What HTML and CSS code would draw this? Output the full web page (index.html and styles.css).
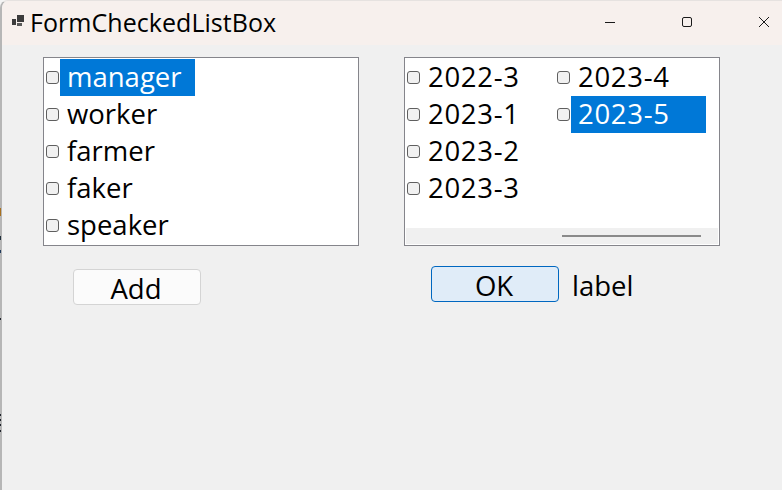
FILE: index.html
```html
<html>

<head>
  <meta charset="UTF-8">
  <title>FormCheckedListBox</title>
  <meta name="viewport" content="width=device-width, initial-scale=1.0">
  <link rel="stylesheet" href="styles.css">
</head>

<body>
  <div class="window">
    <div class="titlebar">
      <svg class="app-icon" width="13" height="13" viewBox="0 0 13 13">
        <rect x="0" y="4" width="4" height="6" fill="#3c3c3c" />
        <rect x="5" y="0" width="7" height="7" fill="#3c3c3c" />
        <rect x="5" y="8" width="5" height="3" fill="#5a5a5a" />
      </svg>
      <span class="title">FormCheckedListBox</span>
      <div class="caption-buttons">
        <svg width="12" height="12" viewBox="0 0 12 12">
          <path d="M1 6.5H11" stroke="#1a1a1a" stroke-width="1" fill="none" />
        </svg>
        <svg width="12" height="12" viewBox="0 0 12 12">
          <rect x="1.5" y="1.5" width="9" height="9" rx="1.5" stroke="#1a1a1a" stroke-width="1" fill="none" />
        </svg>
        <svg width="12" height="12" viewBox="0 0 12 12">
          <path d="M1 1L11 11M11 1L1 11" stroke="#1a1a1a" stroke-width="1" fill="none" />
        </svg>
      </div>
    </div>

    <div class="content">
      <div class="panel">
        <div class="listbox">
          <div class="items">
            <div class="item selected"><span class="check"></span><span class="text">manager</span></div>
            <div class="item"><span class="check"></span><span class="text">worker</span></div>
            <div class="item"><span class="check"></span><span class="text">farmer</span></div>
            <div class="item"><span class="check"></span><span class="text">faker</span></div>
            <div class="item"><span class="check"></span><span class="text">speaker</span></div>
          </div>
        </div>
        <div class="actions actions-left">
          <button class="btn">Add</button>
        </div>
      </div>

      <div class="panel">
        <div class="listbox">
          <div class="items items-columns">
            <div class="item"><span class="check"></span><span class="text">2022-3</span></div>
            <div class="item"><span class="check"></span><span class="text">2023-1</span></div>
            <div class="item"><span class="check"></span><span class="text">2023-2</span></div>
            <div class="item"><span class="check"></span><span class="text">2023-3</span></div>
            <div class="item"><span class="check"></span><span class="text">2023-4</span></div>
            <div class="item selected"><span class="check"></span><span class="text">2023-5</span></div>
          </div>
          <div class="hscroll"><div class="hscroll-thumb"></div></div>
        </div>
        <div class="actions actions-right">
          <button class="btn btn-default">OK</button>
          <span class="label">label</span>
        </div>
      </div>
    </div>
  </div>
  <div class="desktop-edge"></div>
</body>

</html>
```

FILE: styles.css
```css
* {
  font-family: 'Open Sans', 'Noto Sans', sans-serif;
  margin: 0;
  padding: 0;
  box-sizing: border-box;
}

body {
  width: 782px;
  height: 490px;
  overflow: hidden;
  background-color: #f4f4f4;
  color: #000;
}

.window {
  height: 100%;
  background-color: #f0f0f0;
  border-left: 2px solid #b6b6b6;
  border-top: 1px solid #e6e2e0;
  border-top-left-radius: 8px;
  overflow: hidden;
  display: flex;
  flex-direction: column;
}

.titlebar {
  height: 44px;
  background-color: #f7f0ed;
  display: flex;
  align-items: center;
  padding-left: 10px;
}

.app-icon {
  margin-right: 7px;
  margin-top: -4px;
}

.title {
  font-size: 25px;
  letter-spacing: 0.05px;
  margin-top: -2px;
  margin-left: -2px;
}

.caption-buttons {
  margin-left: auto;
  display: flex;
  gap: 65px;
  padding-right: 12px;
  margin-top: -3px;
}

.content {
  display: flex;
  gap: 45px;
  padding: 12px 0 0 41px;
}

.panel {
  width: 316px;
}

.listbox {
  height: 189px;
  background-color: #fff;
  border: 1px solid #85858b;
  padding: 1px;
  position: relative;
}

.items {
  display: grid;
  grid-template-rows: repeat(5, 37px);
}

.items-columns {
  grid-template-rows: repeat(4, 37px);
  grid-auto-flow: column;
  grid-template-columns: repeat(2, 150px);
}

.items-columns .text {
  letter-spacing: 0.7px;
}

.item {
  display: flex;
  align-items: center;
  height: 37px;
  font-size: 27.5px;
}

.check {
  width: 13px;
  height: 13px;
  margin: 0 1px 0 1px;
  border: 1px solid #5f5f5f;
  border-radius: 3px;
  background-color: #f1f1f1;
}

.text {
  width: 135px;
  height: 37px;
  line-height: 35px;
  padding-left: 7px;
}

.selected .text {
  background-color: #0078d7;
  color: #fff;
}

.hscroll {
  position: absolute;
  left: 1px;
  right: 1px;
  bottom: 1px;
  height: 16px;
  background-color: #f0f0f0;
}

.hscroll-thumb {
  position: absolute;
  left: 156px;
  top: 7px;
  width: 139px;
  height: 2px;
  background-color: #8a8a8a;
}

.actions {
  display: flex;
  align-items: center;
}

.actions-left {
  padding: 23px 0 0 30px;
}

.actions-right {
  padding: 20px 0 0 27px;
}

.btn {
  width: 128px;
  height: 36px;
  background-color: #fbfbfb;
  border: 1px solid #d4d4d4;
  border-radius: 4px;
  padding-right: 2px;
  font-size: 27.5px;
  line-height: 38px;
  color: #000;
}

.btn-default {
  background-color: #e0ecf8;
  border-color: #0067c0;
}

.label {
  margin-left: 13px;
  font-size: 27.5px;
  height: 36px;
  line-height: 40px;
}

/* bits of the desktop showing at the window's left edge */
.desktop-edge {
  position: absolute;
  left: 0;
  top: 0;
  width: 1px;
  height: 490px;
  background: linear-gradient(to bottom,
    transparent 208px, #a8701e 208px, #a8701e 216px,
    transparent 216px, transparent 236px, #20303c 236px, #20303c 240px,
    transparent 240px, transparent 250px, #203a5c 250px, #203a5c 253px,
    transparent 253px, transparent 318px, #20242c 318px, #20242c 320px,
    transparent 320px, transparent 414px, #20242c 414px, #20242c 416px,
    transparent 416px, transparent 419px, #20242c 419px, #20242c 421px,
    transparent 421px, transparent 424px, #20242c 424px, #20242c 426px,
    transparent 426px, transparent 430px, #20242c 430px, #20242c 432px,
    transparent 432px);
}
```
